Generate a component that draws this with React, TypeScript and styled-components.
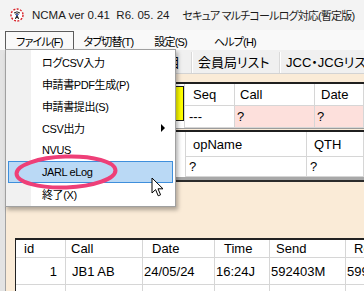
import styled, { createGlobalStyle } from "styled-components";

const UI_FONT = `"Liberation Sans", "Noto Sans CJK JP", sans-serif`;
const GRID_FONT = `"Liberation Sans", "Noto Sans CJK JP", sans-serif`;

const GlobalStyle = createGlobalStyle`
  html, body {
    margin: 0;
    padding: 0;
    background: #fff;
  }
  body {
    font-family: ${UI_FONT};
  }
`;

const fileMenu = [
  { label: "ログCSV入力" },
  { label: "申請書PDF生成(P)" },
  { label: "申請書提出(S)" },
  { label: "CSV出力", sub: true },
  { label: "NVUS" },
  { label: "JARL eLog", active: true },
  { label: "終了(X)" },
];

const tabs = [
  { label: "交信ログ入力", w: 116 },
  { label: "入力項目", w: 70 },
  { label: "会員局リスト", w: 88 },
  { label: "JCC・JCGリスト", w: 120 },
];

const App = () => {
  return (
    <Window>
      <GlobalStyle />
      <TitleBar>
        <AppIcon />
        <span>{"NCMA ver 0.41  R6. 05. 24"}</span>
        <TitleSub>セキュア マルチコールログ対応(暫定版)</TitleSub>
      </TitleBar>

      <MenuBar>
        <MenuTitle $open>ファイル(F)</MenuTitle>
        <MenuTitle>タブ切替(T)</MenuTitle>
        <MenuTitle $wide>設定(S)</MenuTitle>
        <MenuTitle>ヘルプ(H)</MenuTitle>
      </MenuBar>

      <Body>
        <Rail />
        <Content>
          <TabStrip>
            {tabs.map((t) => (
              <Tab key={t.label} $w={t.w}>
                {t.label}
              </Tab>
            ))}
          </TabStrip>

          <Panel>
            <EntrySheet>
              <Lead $w={179}>
                <Flag />
              </Lead>
              <Grid $cols="50px 80px 1fr">
                <Cell $h={22} $pad={8}>Seq</Cell>
                <Cell $h={22} $pad={5}>Call</Cell>
                <Cell $h={22} $pad={6}>Date</Cell>
                <Cell $h={22} $pad={4}>---</Cell>
                <Cell $h={22} $pad={2} $bg="#fde0dc">?</Cell>
                <Cell $h={22} $pad={2} $bg="#fde0dc">?</Cell>
              </Grid>
            </EntrySheet>

            <InfoSheet>
              <Lead $w={180} />
              <Grid $cols="121px 1fr">
                <Cell $h={25} $pad={7}>opName</Cell>
                <Cell $h={25} $pad={7}>QTH</Cell>
                <Cell $h={20} $pad={3}>?</Cell>
                <Cell $h={20} $pad={3}>?</Cell>
              </Grid>
            </InfoSheet>

            <LogSheet>
              <Grid $cols="50px 77px 72px 55px 76px 60px">
                <Cell $h={18} $pad={8}>id</Cell>
                <Cell $h={18} $pad={5}>Call</Cell>
                <Cell $h={18} $pad={9}>Date</Cell>
                <Cell $h={18} $pad={9}>Time</Cell>
                <Cell $h={18} $pad={6}>Send</Cell>
                <Cell $h={18} $pad={8}>Rcv</Cell>

                <Cell $h={27} $pad={8} $right>1</Cell>
                <Cell $h={27} $pad={6}>JB1 AB</Cell>
                <Cell $h={27} $pad={1}>24/05/24</Cell>
                <Cell $h={27} $pad={1}>16:24J</Cell>
                <Cell $h={27} $pad={1}>592403M</Cell>
                <Cell $h={27} $pad={1}>599</Cell>

                <Cell $h={27} $pad={8} $right>2</Cell>
                <Cell $h={27} $pad={6}></Cell>
                <Cell $h={27} $pad={1}></Cell>
                <Cell $h={27} $pad={1}></Cell>
                <Cell $h={27} $pad={1}></Cell>
                <Cell $h={27} $pad={1}></Cell>
              </Grid>
            </LogSheet>
          </Panel>
        </Content>
      </Body>

      <Dropdown>
        {fileMenu.map((m) => (
          <Item key={m.label} $active={m.active}>
            {m.label}
            {m.sub && <SubArrow />}
          </Item>
        ))}
      </Dropdown>

      <Mark width="116" height="46" viewBox="0 0 116 46">
        <ellipse
          cx="57"
          cy="22"
          rx="49.5"
          ry="15.5"
          fill="none"
          stroke="#ee3f78"
          strokeWidth="4"
          transform="rotate(-2 57 22)"
        />
      </Mark>

      <Pointer width="14" height="21" viewBox="0 0 14 21">
        <path
          d="M1 1 L1 16 L4.6 12.6 L7.2 18.8 L9.6 17.8 L7 11.8 L12 11.8 Z"
          fill="#fff"
          stroke="#000"
          strokeWidth="1"
          strokeLinejoin="round"
        />
      </Pointer>
    </Window>
  );
};

const AppIcon = () => (
  <IconBox width="14" height="14" viewBox="0 0 14 14">
    <circle cx="7" cy="7" r="6" fill="#fff" stroke="#d8232a" strokeWidth="1.4" strokeDasharray="2 1.4" />
    <path d="M4 5 Q7 2.6 10 5" fill="none" stroke="#222" strokeWidth="1" />
    <path d="M5.2 6.3 Q7 5 8.8 6.3" fill="none" stroke="#222" strokeWidth="1" />
    <path d="M7 7 L5.4 11 M7 7 L8.6 11 M5.9 9.6 L8.1 9.6" stroke="#222" strokeWidth="1" />
    <circle cx="7" cy="7" r="0.9" fill="#2a4fd0" />
  </IconBox>
);

const IconBox = styled.svg`
  flex: none;
  margin-right: 8px;
`;

const Window = styled.div`
  position: relative;
  width: 364px;
  height: 291px;
  overflow: hidden;
  display: flex;
  flex-direction: column;
  background: #f0f0f0;
`;

const TitleBar = styled.div`
  flex: none;
  height: 30px;
  display: flex;
  align-items: center;
  padding-left: 10px;
  background: #f3f3f3;
  color: #1b1b1b;
  font-size: 11.5px;
  font-feature-settings: "palt";
  white-space: pre;
  overflow: hidden;
`;

const TitleSub = styled.span`
  margin-left: 13px;
  font-size: 11px;
  letter-spacing: -0.8px;
`;

const MenuBar = styled.div`
  flex: none;
  height: 20px;
  display: flex;
  align-items: flex-end;
  padding-left: 5px;
  background: #f9f9f9;
  color: #000;
  font-size: 11px;
  letter-spacing: -0.8px;
  font-feature-settings: "palt";
  white-space: nowrap;
`;

const MenuTitle = styled.div<{ $open?: boolean; $wide?: boolean }>`
  height: 19px;
  box-sizing: border-box;
  display: flex;
  align-items: center;
  padding: 0 ${(p) => (p.$wide ? 16 : 10)}px 0 ${(p) => (p.$open ? 10 : 9)}px;
  border: 1px solid ${(p) => (p.$open ? "#5c5c5c" : "transparent")};
  border-bottom: none;
`;

const Body = styled.div`
  flex: 1;
  min-height: 0;
  display: flex;
`;

const Rail = styled.div`
  flex: none;
  width: 5px;
  background: #e3e3e3;
  border-right: 1px solid #a3a3a3;
`;

const Content = styled.div`
  flex: 1;
  min-width: 0;
  display: flex;
  flex-direction: column;
`;

const TabStrip = styled.div`
  flex: none;
  height: 21px;
  margin-top: 2px;
  display: flex;
  overflow: hidden;
  background: #f0f0f0;
  border-bottom: 1px solid #d3d3d3;
  font-size: 13px;
  font-feature-settings: "palt";
  white-space: nowrap;
`;

const Tab = styled.div<{ $w: number }>`
  flex: none;
  width: ${(p) => p.$w}px;
  box-sizing: border-box;
  padding-left: 6px;
  line-height: 21px;
  color: #000;
  border-right: 1px solid #d9d9d9;
  box-shadow: 1px 0 0 #fff;
`;

const Panel = styled.div`
  flex: 1;
  display: flex;
  flex-direction: column;
  padding-top: 8px;
  background: #faebd7;
`;

const EntrySheet = styled.div`
  flex: none;
  display: flex;
  background: #fff;
  border-top: 2px solid #1f1f1f;
  border-bottom: 1px solid #9c9c9c;
`;

const InfoSheet = styled.div`
  flex: none;
  display: flex;
  margin-top: 1px;
  background: #fff;
  border-top: 2px solid #1f1f1f;
  border-bottom: 3px solid #a8a8a8;
  box-shadow: 0 2px 0 #2b2b2b;
`;

const LogSheet = styled.div`
  flex: none;
  display: flex;
  margin: 58px 0 0 9px;
  background: #fff;
  border-top: 2px solid #222;
  border-left: 1px solid #222;
`;

const Lead = styled.div<{ $w: number }>`
  flex: none;
  width: ${(p) => p.$w}px;
  display: flex;
  justify-content: flex-end;
  align-items: flex-start;
  border-right: 1px solid #d6d6d6;
  box-sizing: border-box;
`;

const Flag = styled.div`
  width: 36px;
  height: 35px;
  margin-top: 2px;
  box-sizing: border-box;
  background: #ffff00;
  border: 1px solid #1a1a1a;
`;

const Grid = styled.div<{ $cols: string }>`
  flex: 1;
  display: grid;
  grid-template-columns: ${(p) => p.$cols};
`;

const Cell = styled.div<{ $h: number; $pad: number; $bg?: string; $right?: boolean }>`
  height: ${(p) => p.$h}px;
  box-sizing: border-box;
  display: flex;
  align-items: center;
  justify-content: ${(p) => (p.$right ? "flex-end" : "flex-start")};
  padding: 0 ${(p) => p.$pad}px;
  background: ${(p) => p.$bg || "#fff"};
  border-right: 1px solid #d6d6d6;
  border-bottom: 1px solid #d6d6d6;
  color: #000;
  font-family: ${GRID_FONT};
  font-size: 13px;
  white-space: nowrap;
  overflow: hidden;
`;

const Dropdown = styled.div`
  position: absolute;
  left: 5px;
  top: 49px;
  width: 171px;
  box-sizing: border-box;
  padding: 1px 0;
  border: 1px solid #a0a0a0;
  background: linear-gradient(to right, #f1f1f1 0 25px, #fff 25px);
  box-shadow: 2px 3px 4px rgba(0, 0, 0, 0.3);
  color: #000;
  font-size: 11px;
  letter-spacing: -0.4px;
  font-feature-settings: "palt";
  white-space: nowrap;
`;

const Item = styled.div<{ $active?: boolean }>`
  height: 22px;
  box-sizing: border-box;
  margin: 0 2px;
  padding: 0 7px 0 33px;
  display: flex;
  align-items: center;
  border: 1px solid ${(p) => (p.$active ? "#3f8fdc" : "transparent")};
  background: ${(p) => (p.$active ? "#bad9f5" : "transparent")};
`;

const SubArrow = styled.span`
  margin-left: auto;
  width: 0;
  height: 0;
  border-left: 4px solid #000;
  border-top: 4px solid transparent;
  border-bottom: 4px solid transparent;
`;

const Mark = styled.svg`
  position: absolute;
  left: 9px;
  top: 150px;
`;

const Pointer = styled.svg`
  position: absolute;
  left: 151px;
  top: 177px;
`;

export default App;
